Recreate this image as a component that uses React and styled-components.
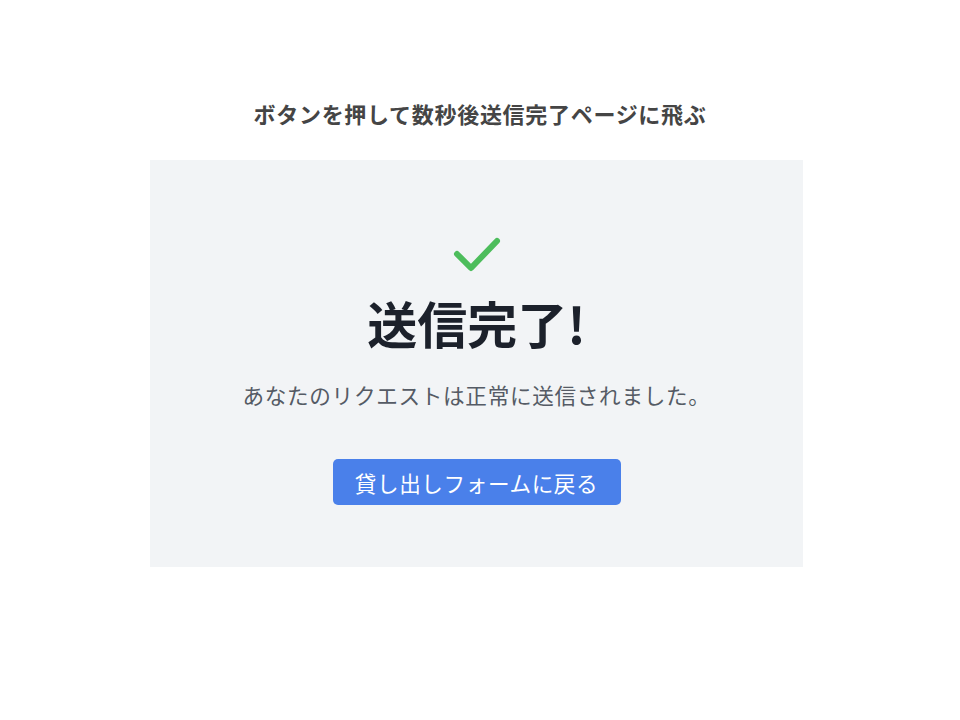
import React from "react";
import styled, { createGlobalStyle } from "styled-components";

const GlobalStyle = createGlobalStyle`
  body {
    margin: 0;
    background: #ffffff;
    font-family: "Noto Sans CJK JP", "Noto Sans", sans-serif;
  }
`;

export default function App() {
  return (
    <>
      <GlobalStyle />
      <Page>
        <PageTitle>ボタンを押して数秒後送信完了ページに飛ぶ</PageTitle>
        <Panel>
          <CheckIcon viewBox="0 0 48 38" width="48" height="38">
            <polyline
              points="4,18 18,32 44,5"
              fill="none"
              stroke="#4dbd5c"
              strokeWidth="6"
              strokeLinecap="round"
              strokeLinejoin="round"
            />
          </CheckIcon>
          <Heading>送信完了!</Heading>
          <Message>あなたのリクエストは正常に送信されました。</Message>
          <BackButton>貸し出しフォームに戻る</BackButton>
        </Panel>
      </Page>
    </>
  );
}

const Page = styled.div`
  width: 960px;
  height: 720px;
  display: flex;
  flex-direction: column;
  align-items: center;
  padding-top: 99px;
  box-sizing: border-box;
`;

const PageTitle = styled.h1`
  margin: 0;
  font-size: 22px;
  line-height: 28px;
  font-weight: 700;
  color: #454545;
  letter-spacing: 0.7px;
`;

const Panel = styled.div`
  margin-top: 33px;
  margin-right: 7px;
  width: 653px;
  height: 407px;
  box-sizing: border-box;
  background: #f2f4f6;
  display: flex;
  flex-direction: column;
  align-items: center;
  padding-top: 76px;
`;

const CheckIcon = styled.svg`
  display: block;
`;

const Heading = styled.h2`
  margin: 19px 0 0;
  font-size: 50px;
  line-height: 58px;
  font-weight: 700;
  color: #1c212b;
`;

const Message = styled.p`
  margin: 28px 0 0;
  font-size: 21.6px;
  line-height: 32px;
  color: #555b65;
  letter-spacing: 0.7px;
`;

const BackButton = styled.button`
  margin-top: 48px;
  width: 288px;
  height: 46px;
  border: none;
  border-radius: 5px;
  background: #4a80ea;
  color: #ffffff;
  font-family: "Noto Sans CJK JP", "Noto Sans", sans-serif;
  font-size: 21.6px;
  letter-spacing: 0.6px;
  cursor: pointer;
`;
